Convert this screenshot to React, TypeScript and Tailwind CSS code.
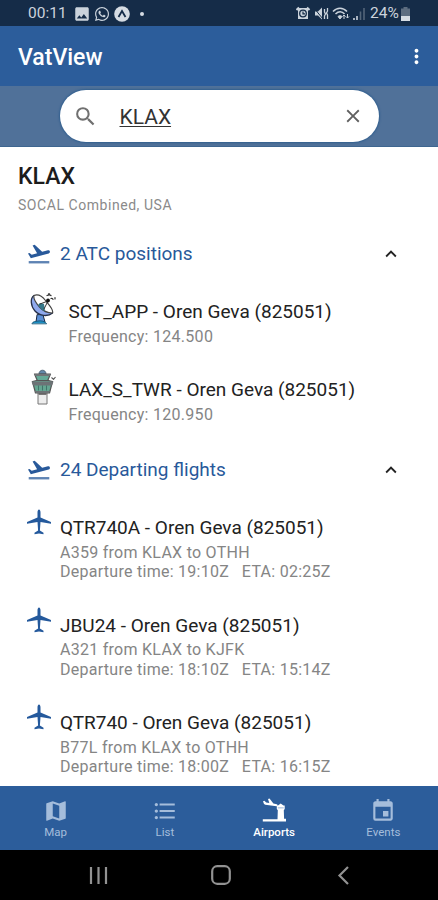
import React from 'react';
import {
  MdClose,
  MdEvent,
  MdFormatListBulleted,
  MdImage,
  MdKeyboardArrowUp,
  MdMap,
  MdMoreVert,
  MdSearch,
} from 'react-icons/md';
import { FaWhatsapp } from 'react-icons/fa';

interface AtcPosition {
  callsign: string;
  frequency: string;
  icon: React.ReactNode;
}

interface Flight {
  callsign: string;
  route: string;
  departure: string;
  eta: string;
}

const PILOT = 'Oren Geva (825051)';

const RadarIcon = () => (
  <svg width="28" height="33" viewBox="0 0 28 33" fill="none" strokeLinecap="round" strokeLinejoin="round">
    <path d="M8 22l-1 7h9l-2-7z" fill="#5b8fd6" stroke="#1b2740" strokeWidth="1" />
    <path d="M3 30.500c1-2.500 4-2 6-2.500 3-.5 7 0 8.500 2.500z" fill="#1d8fc4" stroke="#14506e" strokeWidth="0.800" />
    <path d="M5 2.500C1 5 1.500 13 6 18c4.500 5 13 6 17.500 2z" fill="#8fa9ee" stroke="#26304a" strokeWidth="1.300" />
    <path d="M5 2.500c4-1.500 8 .5 11.500 5s8.500 9 7 12.500c-4 0-9-1.500-13-6S4 6 5 2.500z" fill="#fff" stroke="#444" strokeWidth="1.200" />
    <path d="M9 12l2-2 4 1 1 7-3-1z" fill="#35788a" />
    <path d="M11 11l8-3M15 16l4-8" stroke="#333" strokeWidth="1" />
    <circle cx="19" cy="7.500" r="1.900" fill="#111" />
    <path d="M18 2.500c2-1 3-1 4 0M22 5.500c1-.5 2 0 2 1M26 4.500v1.500M19.500.8h1" stroke="#333" strokeWidth="1.200" />
  </svg>
);

const TowerIcon = () => (
  <svg className="-mt-[2px]" width="28" height="36" viewBox="0 0 28 36" fill="none" strokeLinejoin="round">
    <path d="M9 23h9v12H9z" fill="#ededed" stroke="#777" strokeWidth="1" />
    <path d="M9.500 24h8v2h-8z" fill="#777" />
    <path d="M10 5c0-5 7-5 7 0z" fill="#6288a9" stroke="#4c6275" strokeWidth="1" />
    <path d="M5.500 5h16l-3 7h-10z" fill="#65aa98" stroke="#555" strokeWidth="1.200" />
    <path d="M5 5h17l-1.500 2h-14z" fill="#707477" />
    <path d="M3.500 12.500l4-1h12l4 1L20.500 24h-14z" fill="#64a691" stroke="#555" strokeWidth="1.200" />
    <path d="M2.500 12.500h22l-1.500 4H4zM6 22h15l-1 2H7z" fill="#6d7376" />
    <path d="M9.500 16.500v5M13.500 16.500v5M17.500 16.500v5" stroke="#3d6f65" strokeWidth="0.900" />
    <path d="M22.500 8.500l2 1.800 2-2.300" stroke="#555" strokeWidth="1.100" />
  </svg>
);

const TakeoffIcon = () => (
  <svg width="26" height="26" viewBox="0 0 24 24" fill="currentColor">
    <path d="M22.070 9.640c-.21-.8-1.040-1.280-1.840-1.060L14.920 10 8 3.570l-1.910.51 4.140 7.170-4.970 1.330-1.970-1.540-1.450.39 1.820 3.160.77 1.330 1.600-.42 5.310-1.430 4.350-1.160L21 11.500c.81-.24 1.280-1.060 1.070-1.860z" />
    <path d="M2.500 18.500h19v2.200h-19z" opacity="0.750" />
  </svg>
);

const PlaneIcon = () => (
  <svg width="26" height="26" viewBox="0 0 26 26" fill="#24599c">
    <path d="M13 .5c-.9 0-1.500 1.400-1.500 3v5L1 13v1.700l10.500-1.700.6 8.500-3.600 2.200v1.500l4.500-.6 4.500.6v-1.500l-3.600-2.200.6-8.500L25 14.700V13L14.500 8.500v-5c0-1.600-.6-3-1.500-3z" />
  </svg>
);

const AirportIcon = () => (
  <svg width="24" height="26" viewBox="0 0 24 26" fill="currentColor">
    <path d="M1 3.200l1.400-.4 1.800 1.600 3.100.6L6 1l1.500-.5 3.900 4.900 3.400.9c1.200.4 1 1.900-.3 1.900L3.300 6.800 2 6z" />
    <path d="M18.700 5.500l2.800 2h1.200v3.500l-.9 1.300.3 8.500H24v2.700H.8v-2.300h14.700l.3-8.900-1-1.300V7.500h1.200z" />
    <path d="M15.800 9.300h6v1.100h-6z" fill="#a5bddb" />
  </svg>
);

const positions: AtcPosition[] = [
  { callsign: 'SCT_APP', frequency: '124.500', icon: <RadarIcon /> },
  { callsign: 'LAX_S_TWR', frequency: '120.950', icon: <TowerIcon /> },
];

const flights: Flight[] = [
  { callsign: 'QTR740A', route: 'A359 from KLAX to OTHH', departure: '19:10Z', eta: '02:25Z' },
  { callsign: 'JBU24', route: 'A321 from KLAX to KJFK', departure: '18:10Z', eta: '15:14Z' },
  { callsign: 'QTR740', route: 'B77L from KLAX to OTHH', departure: '18:00Z', eta: '16:15Z' },
];

const StatusBar = () => (
  <div className="flex h-[26px] shrink-0 items-center justify-between bg-[#152c48] pr-[28px] pl-[28px] pt-[2px] text-[#cbd3dc]">
    <div className="flex items-center">
      <span className="w-[45px] text-[15.500px]">00:11</span>
      <MdImage className="h-[18px] w-[18px]" />
      <FaWhatsapp className="ml-[3px] h-[16px] w-[16px]" />
      <svg className="ml-[4px]" width="16" height="16" viewBox="0 0 16 16">
        <circle cx="8" cy="8" r="7.800" fill="#d6dce3" />
        <path d="M4.500 11L8 5l3.500 6" fill="none" stroke="#152c48" strokeWidth="1.800" />
      </svg>
      <span className="ml-[10px] h-[4px] w-[4px] rounded-full bg-[#d6dce3]" />
    </div>
    <div className="flex items-center">
      <svg width="70" height="16" viewBox="0 0 70 16" fill="none" stroke="#cbd3dc">
        <path d="M2 2h10v11H2z" fill="#cbd3dc" stroke="none" />
        <path d="M.5 4L3 1.500M13.500 4L11 1.500" strokeWidth="2" />
        <circle cx="7" cy="7.500" r="3.300" stroke="#152c48" strokeWidth="1.300" />
        <path d="M7 5.500v2.300h2" stroke="#152c48" strokeWidth="1.200" />
        <path d="M19 5.500h3l4-4v12l-4-4h-3z" fill="#cbd3dc" stroke="none" />
        <path d="M18 2l9 11" stroke="#152c48" strokeWidth="1" />
        <path d="M28.500 3v3l1 2-1 2v3M31.500 2v3l-1 2 1 2v4" strokeWidth="1.300" />
        <path d="M37 5.500c4-4.500 10-4.500 14 0M39.500 8c3-3 6.500-3 9 0" strokeWidth="1.500" />
        <path d="M42 10.500c1-1 3-1 4 0L44 13z" fill="#cbd3dc" />
        <path d="M48 13V9M46.500 10.500L48 9l1.500 1.500M51.500 8v4M50 10.500l1.500 1.500 1.500-1.500" strokeWidth="1" />
        <path d="M58 12v2M61 10v4" strokeWidth="1.600" />
        <path d="M64.500 5.500V14M68 2v12" stroke="#536579" strokeWidth="1.600" />
      </svg>
      <span className="ml-[4px] w-[31px] text-[15.500px] tracking-[0.100px]">24%</span>
      <svg width="9" height="14" viewBox="0 0 9 14">
        <path d="M2.500 0h4v1.500H9V14H0V1.500h2.500z" fill="#5d6d80" />
        <path d="M0 9h9v5H0z" fill="#d6dce3" />
      </svg>
    </div>
  </div>
);

const SearchBar = () => (
  <div className="flex h-[61px] shrink-0 justify-center border-b border-[#3e6690] bg-[#507199] pt-[4px]">
    <div className="flex h-[52px] w-[319px] items-center rounded-full bg-white pr-[15px] pl-[13px] shadow-[0_0_2px_1px_#315f8f]">
      <MdSearch className="h-[25px] w-[25px] text-[#707070]" />
      <span className="ml-[22px] flex-1 pt-[2px] text-[21px] leading-[26px] text-[#333] underline decoration-1 underline-offset-2">
        KLAX
      </span>
      <MdClose className="h-[22px] w-[22px] text-[#606060]" />
    </div>
  </div>
);

const SectionHeader = ({ title }: { title: string }) => (
  <div className="flex h-[26px] items-center pr-[36px] pl-[26px] text-[#28599a]">
    <TakeoffIcon />
    <span className="ml-[8px] flex-1 pt-px text-[19px]">{title}</span>
    <MdKeyboardArrowUp className="h-[22px] w-[22px] text-[#222]" />
  </div>
);

const PositionRow = ({ position }: { position: AtcPosition }) => (
  <div className="flex h-[78px] pl-[29px]">
    <div className="w-[39.500px] shrink-0">{position.icon}</div>
    <div className="pt-[6px]">
      <p className="text-[19px] leading-[26px] text-[#222]">{position.callsign} - {PILOT}</p>
      <p className="pt-px text-[16px] leading-[22px] tracking-[0.280px] text-[#858585]">Frequency: {position.frequency}</p>
    </div>
  </div>
);

const FlightRow = ({ flight }: { flight: Flight }) => (
  <div className="flex h-[97.500px] pl-[26px]">
    <div className="w-[34px] shrink-0">
      <PlaneIcon />
    </div>
    <div className="pt-[6px]">
      <p className="text-[19px] leading-[26px] text-[#222]">{flight.callsign} - {PILOT}</p>
      <div className="pt-[1.500px] text-[16px] leading-[19.500px] tracking-[0.270px] text-[#858585]">
        <p>{flight.route}</p>
        <p className="whitespace-pre">Departure time: {flight.departure}{'   '}ETA: {flight.eta}</p>
      </div>
    </div>
  </div>
);

const TabItem = ({ label, active, children }: { label: string; active?: boolean; children: React.ReactNode }) => (
  <div className={`flex flex-1 flex-col items-center pt-[12px] ${active ? 'text-white' : 'text-[#a5bddb]'}`}>
    {children}
    <span className={`text-[11.500px] leading-[16px] ${active ? 'font-medium' : ''}`}>{label}</span>
  </div>
);

export default function App() {
  return (
    <div className="flex h-[900px] w-[438px] flex-col overflow-hidden bg-white font-['Roboto',sans-serif]">
      <StatusBar />
      <header className="flex h-[60px] shrink-0 items-center justify-between bg-[#2c5d9b] pr-[10px] pl-[18px] text-white">
        <h1 className="pt-[4px] text-[23px] font-medium">VatView</h1>
        <MdMoreVert className="h-[23px] w-[23px]" />
      </header>
      <SearchBar />

      <main className="min-h-0 flex-1 overflow-hidden">
        <div className="h-[94px] pt-[16px] pl-[18px]">
          <h2 className="text-[23px] leading-[28px] font-medium text-[#1c1c1c]">KLAX</h2>
          <p className="mt-[4px] text-[14px] leading-[20px] tracking-[0.550px] text-[#8a8a8a]">SOCAL Combined, USA</p>
        </div>
        <SectionHeader title="2 ATC positions" />
        <div className="h-[190px] pt-[26px]">
          {positions.map((p) => (
            <PositionRow key={p.callsign} position={p} />
          ))}
        </div>
        <SectionHeader title="24 Departing flights" />
        <div className="pt-[26px]">
          {flights.map((f) => (
            <FlightRow key={f.callsign} flight={f} />
          ))}
        </div>
      </main>

      <nav className="flex h-[64px] shrink-0 bg-[#2c5d9b] pl-px">
        <TabItem label="Map">
          <MdMap className="h-[26px] w-[26px]" />
        </TabItem>
        <TabItem label="List">
          <MdFormatListBulleted className="h-[26px] w-[26px]" />
        </TabItem>
        <TabItem label="Airports" active>
          <AirportIcon />
        </TabItem>
        <TabItem label="Events">
          <MdEvent className="h-[26px] w-[26px]" />
        </TabItem>
      </nav>

      <div className="flex h-[50px] shrink-0 items-center bg-black pl-[89px]">
        <svg width="19" height="19" viewBox="0 0 19 19" stroke="#929292" strokeWidth="2.200">
          <path d="M2 1v17M9.500 1v17M17 1v17" />
        </svg>
        <svg className="ml-[103px]" width="20" height="20" viewBox="0 0 20 20" fill="none" stroke="#929292" strokeWidth="2.200">
          <rect x="1.200" y="1.200" width="17.600" height="17.600" rx="5" />
        </svg>
        <svg className="ml-[106px]" width="13" height="19" viewBox="0 0 13 19" fill="none" stroke="#929292" strokeWidth="2.200">
          <path d="M11 1L2.500 9.500 11 18" />
        </svg>
      </div>
    </div>
  );
}
